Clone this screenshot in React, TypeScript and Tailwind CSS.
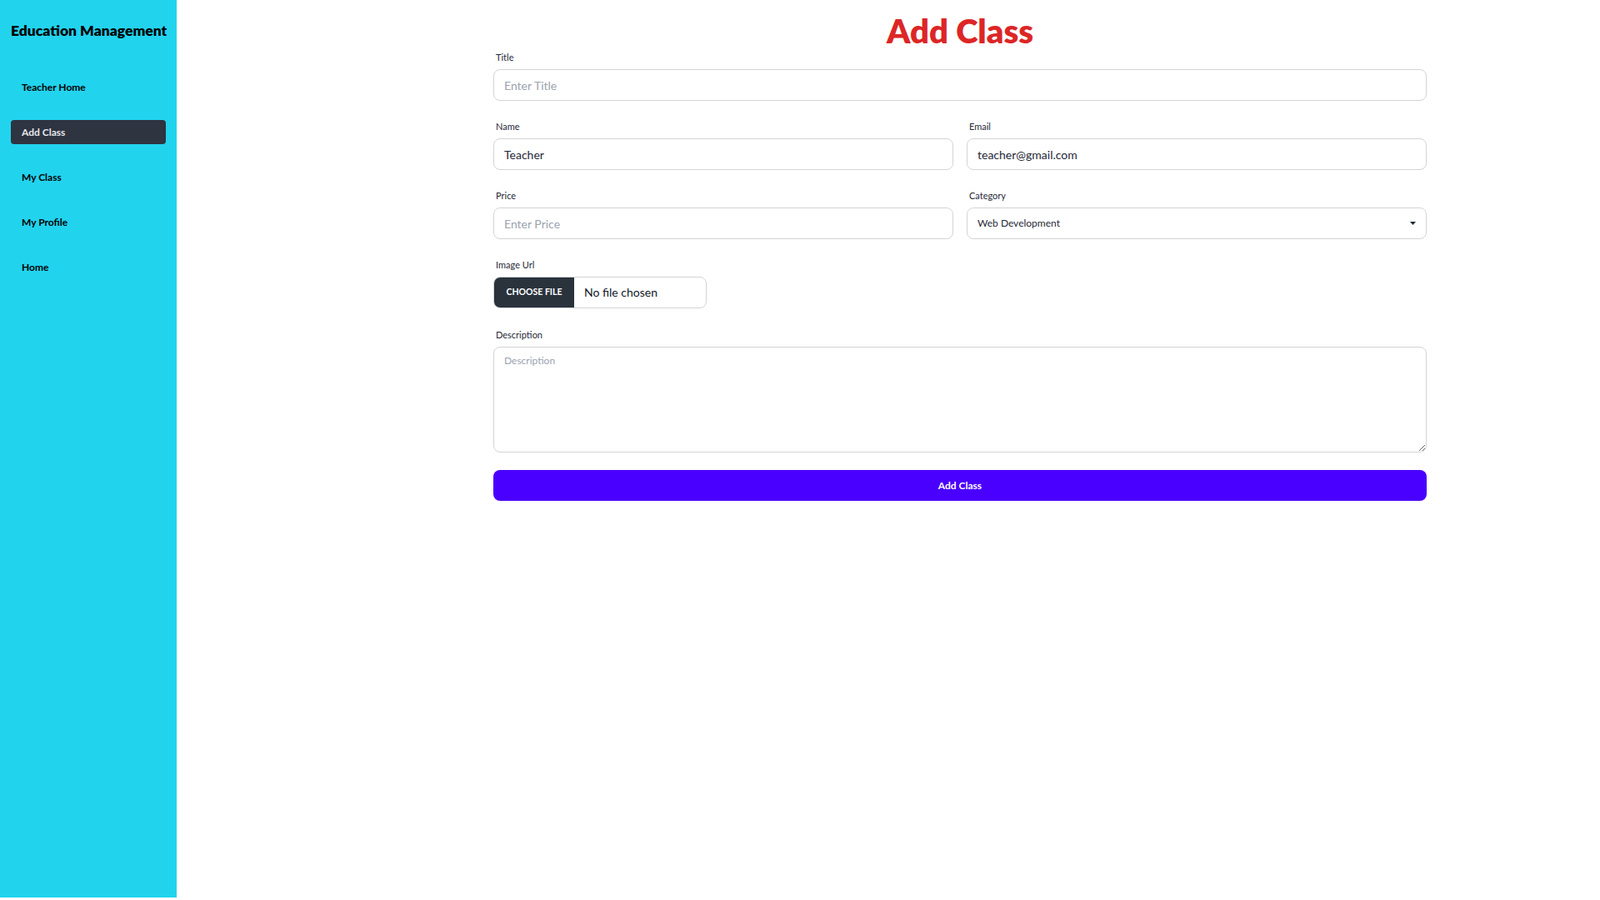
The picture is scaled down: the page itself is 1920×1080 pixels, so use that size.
import { useState } from "react";

const navItems = ["Teacher Home", "Add Class", "My Class", "My Profile", "Home"];

const categories = [
  "Web Development",
  "Mobile Development",
  "Data Science",
  "Graphic Design",
  "Marketing",
];

function Sidebar({ active }: { active: string }) {
  return (
    <aside className="w-[212px] h-[1077px] shrink-0 bg-[#22d3ee] px-[13px] pt-[23px]">
      <h2 className="text-[17.5px] leading-7 font-extrabold text-black whitespace-nowrap">
        Education Management
      </h2>
      <ul className="mt-[39px] flex flex-col gap-[25px]">
        {navItems.map((item) => (
          <li
            key={item}
            className={
              item === active
                ? "h-[29px] flex items-center pl-[13px] rounded bg-[#2e3440] text-[#e5e7eb] text-xs font-bold cursor-pointer"
                : "h-[29px] flex items-center pl-[13px] rounded text-black text-xs font-bold cursor-pointer"
            }
          >
            {item}
          </li>
        ))}
      </ul>
    </aside>
  );
}

function Label({ children }: { children: string }) {
  return (
    <label className="block h-4 leading-4 mb-[6px] px-[3px] text-[11px] text-[#1f2937]">
      {children}
    </label>
  );
}

const inputClass =
  "w-full h-[38px] rounded-lg border border-[#d4d4d8] bg-white px-3 text-sm text-[#1f2937] placeholder:text-[#9ca3af] outline-none";

export default function App() {
  const [fileName, setFileName] = useState("");

  return (
    <div className="flex bg-white font-['Lato','Open_Sans',sans-serif]">
      <Sidebar active="Add Class" />
      <main className="flex-1 pl-[172px] pt-[16px]">
        <h1 className="text-[40px] leading-[42px] font-extrabold text-center text-[#dc2626]">
          Add Class
        </h1>
        <form
          className="w-[1120px] mx-auto mt-[3px]"
          onSubmit={(e) => e.preventDefault()}
        >
          <div className="mb-[23px]">
            <Label>Title</Label>
            <input type="text" placeholder="Enter Title" className={inputClass} />
          </div>

          <div className="mb-[23px] grid grid-cols-2 gap-4">
            <div>
              <Label>Name</Label>
              <input type="text" defaultValue="Teacher" readOnly className={inputClass} />
            </div>
            <div>
              <Label>Email</Label>
              <input
                type="email"
                defaultValue="teacher@gmail.com"
                readOnly
                className={inputClass}
              />
            </div>
          </div>

          <div className="mb-[23px] grid grid-cols-2 gap-4">
            <div>
              <Label>Price</Label>
              <input type="number" placeholder="Enter Price" className={inputClass} />
            </div>
            <div>
              <Label>Category</Label>
              <div className="relative">
                <select
                  defaultValue="Web Development"
                  className="w-full h-[38px] appearance-none rounded-lg border border-[#d4d4d8] bg-white px-3 text-xs text-[#1f2937] outline-none"
                >
                  {categories.map((c) => (
                    <option key={c}>{c}</option>
                  ))}
                </select>
                <svg
                  className="pointer-events-none absolute right-[13px] top-1/2 -translate-y-1/2"
                  width="7"
                  height="4"
                  viewBox="0 0 7 4"
                >
                  <path d="M0 0h7L3.5 4z" fill="#1f2937" />
                </svg>
              </div>
            </div>
          </div>

          <div className="mb-[24px]">
            <Label>Image Url</Label>
            <label className="flex w-[256px] h-[38px] rounded-lg border border-[#d4d4d8] overflow-hidden cursor-pointer">
              <span className="w-[96px] shrink-0 flex items-center justify-center bg-[#2a323c] text-white text-[10.5px] font-bold uppercase">
                Choose File
              </span>
              <span className="flex items-center pl-[12px] text-sm text-[#111827]">
                {fileName || "No file chosen"}
              </span>
              <input
                type="file"
                className="hidden"
                onChange={(e) => setFileName(e.target.files?.[0]?.name ?? "")}
              />
            </label>
          </div>

          <div className="mb-[21px]">
            <Label>Description</Label>
            <textarea
              placeholder="Description"
              className="block w-full h-[127px] rounded-lg border border-[#d4d4d8] px-3 py-2 text-xs leading-4 text-[#1f2937] placeholder:text-[#9ca3af] outline-none"
            />
          </div>

          <button
            type="submit"
            className="w-full h-[37px] rounded-lg bg-[#4a00ff] text-white text-xs font-bold"
          >
            Add Class
          </button>
        </form>
      </main>
    </div>
  );
}
